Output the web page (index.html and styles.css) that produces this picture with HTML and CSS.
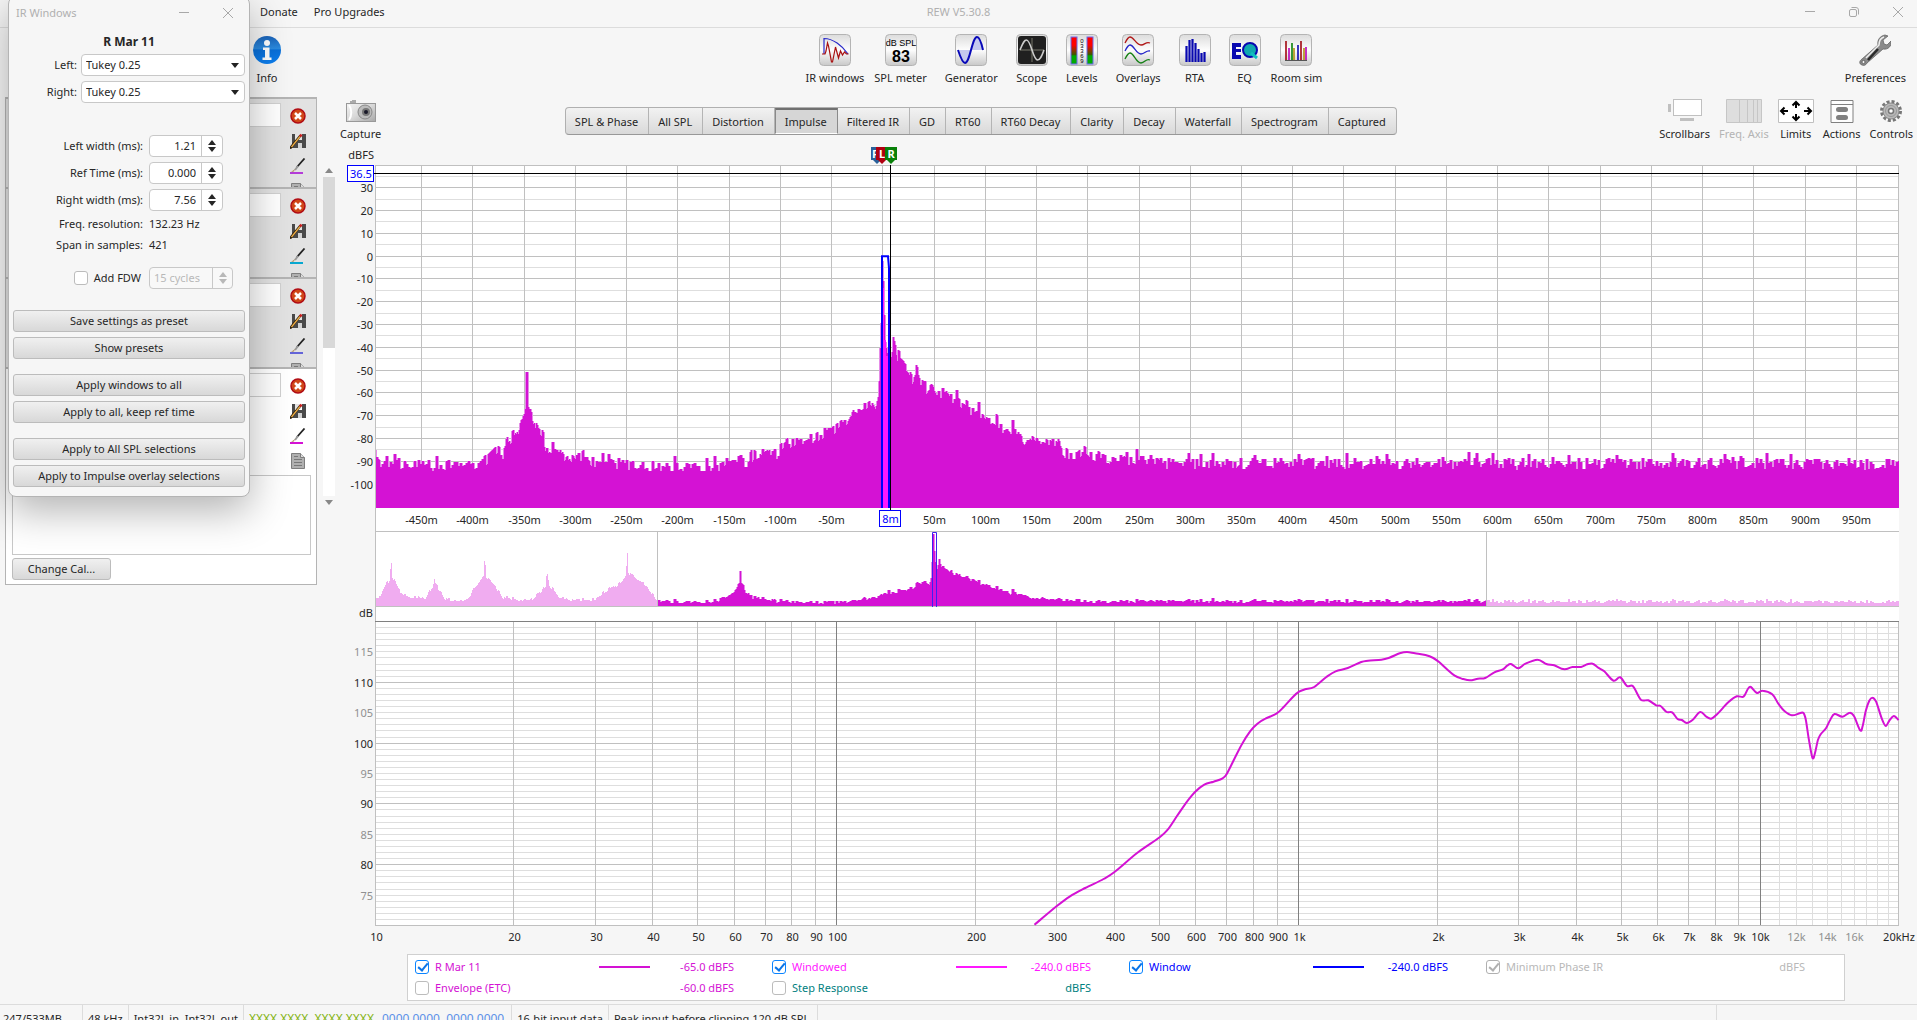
FILE: index.html
```html
<!DOCTYPE html>
<html lang="en">
<head>
    <meta charset="UTF-8">
    <meta name="viewport" content="width=device-width, initial-scale=1.0">
    <title>REW V5.30.8</title>
    <link rel="stylesheet" href="styles.css">
</head>
<body>
    <header class="titlebar">
        <nav class="menu">
            <a href="#donate">Donate</a>
            <a href="#upgrades">Pro Upgrades</a>
        </nav>
        <h1 class="title">REW V5.30.8</h1>
        <div class="window-controls">
            <button aria-label="Minimize"><svg width="10" height="10"><path d="M0 4.5h10"/></svg></button>
            <button aria-label="Restore"><svg width="10" height="10"><rect x=".5" y="2.5" width="7" height="7" rx="1.5"/><path d="M2.5.5H7A2.5 2.5 0 0 1 9.500 3v4.500"/></svg></button>
            <button aria-label="Close"><svg width="10" height="10"><path d="M0 0l10 10M10 0L0 10"/></svg></button>
        </div>
    </header>

    <div class="toolbar">
        <button class="tool">
            <svg width="32" height="32" viewBox="0 0 32 32">
                <defs>
                    <linearGradient id="infoFill" x2="0" y2="1"><stop offset="0" stop-color="#1a62b8"/><stop offset=".45" stop-color="#2b8be0"/><stop offset=".5" stop-color="#0a6fd8"/><stop offset="1" stop-color="#0c7ff0"/></linearGradient>
                    <linearGradient id="tile" x2="0" y2="1"><stop offset="0" stop-color="#dcdcdc"/><stop offset=".5" stop-color="#fdfdfd"/><stop offset="1" stop-color="#c8c8c8"/></linearGradient>
                    <linearGradient id="metal" x2="1" y2="1"><stop offset="0" stop-color="#f4f4f4"/><stop offset=".5" stop-color="#d8d8d8"/><stop offset="1" stop-color="#a8a8a8"/></linearGradient>
                </defs>
                <circle cx="16" cy="16" r="14" fill="url(#infoFill)"/>
                <circle cx="16" cy="9" r="3" fill="#fff"/>
                <path d="M12 13.500h6.500v10h2v2.500h-9v-2.500h2.500v-7.500h-2z" fill="#fff"/>
            </svg>
            Info
        </button>

        <div class="tool-group">
            <button class="tool">
                <svg width="32" height="32" viewBox="0 0 32 32"><use href="#tileBox"/><path d="M5 20V4.500c9 0 18 7 24 15.500" fill="none" stroke="#2828c8" stroke-width="1.200"/><path d="M3 20h3l1-3 1.500-8 1 3 3 16 1 0 3-15 3 11 2-7 2 4 2-3 2 2h2" fill="none" stroke="#a81010" stroke-width="1.200"/></svg>
                IR windows
            </button>
            <button class="tool tight">
                <svg width="32" height="32" viewBox="0 0 32 32"><use href="#tileBox"/><text x="16" y="12" class="spl-small">dB SPL</text><text x="16" y="28" class="spl-big">83</text></svg>
                SPL meter
            </button>
            <button class="tool">
                <svg width="32" height="32" viewBox="0 0 32 32"><use href="#tileBox"/><path d="M4 16h12c-2 9-4 13-6 13s-4-5-6-13zM16 16h12c-2-9-4-13-6-13s-4 5-6 13z" fill="#c4c8ee"/><path d="M3 16c3 9 5 13 7 13 5 0 7-26 12-26 2 0 4 4 6 13" fill="none" stroke="#0808b8" stroke-width="2"/></svg>
                Generator
            </button>
            <button class="tool">
                <svg width="32" height="32" viewBox="0 0 32 32"><use href="#tileBox"/><rect x="2" y="2" width="28" height="28" rx="3" fill="#202020"/><path d="M16 4v24M4 16h24" stroke="#77776a"/><path d="M4 16c3-7 4-10 6.500-10 4.500 0 6.500 20 11 20 2.500 0 4-3 6.500-10" fill="none" stroke="#ccc" stroke-width="1.600"/></svg>
                Scope
            </button>
            <button class="tool">
                <svg width="32" height="32" viewBox="0 0 32 32">
                    <defs><linearGradient id="level" x2="0" y2="1"><stop offset=".3" stop-color="#f00"/><stop offset=".65" stop-color="#3c5a00"/><stop offset=".7" stop-color="#0a0"/></linearGradient></defs>
                    <use href="#tileBox"/><rect x="5" y="3" width="6" height="27" fill="url(#level)" stroke="#6a6af0" stroke-width="1"/><rect x="21" y="3" width="6" height="27" fill="url(#level)" stroke="#6a6af0" stroke-width="1"/>
                    <g class="level-digits"><text x="16" y="9">0</text><text x="16" y="14">3</text><text x="16" y="19">3</text><text x="16" y="24">6</text><text x="16" y="29">9</text></g>
                </svg>
                Levels
            </button>
            <button class="tool">
                <svg width="32" height="32" viewBox="0 0 32 32"><use href="#tileBox"/><g fill="none" stroke-width="1.300"><path d="M3 9c2-4 3-6 5-6 4 0 6 8 11 8 4 0 5-4 9-2" stroke="#b01818"/><path d="M3 17c2-4 3-6 5-6 4 0 6 9 11 9 4 0 5-4 9-3" stroke="#2424c8"/><path d="M3 25c2-4 3-6 5-6 4 0 6 10 11 10 4 0 5-5 9-3" stroke="#148014"/></g></svg>
                Overlays
            </button>
            <button class="tool">
                <svg width="32" height="32" viewBox="0 0 32 32"><use href="#tileBox"/><path d="M7.500 28V12M10.500 28V6M13.500 28V5M16.500 28V9M19.500 28V15M22.500 28V19M25.500 28V18" stroke="#0808b0" stroke-width="2.200"/></svg>
                RTA
            </button>
            <button class="tool">
                <svg width="32" height="32" viewBox="0 0 32 32"><use href="#tileBox"/><path d="M3 9h9v4H7v2h5v3H7v3h5v4H3z" fill="#0808b0"/><circle cx="21" cy="16" r="7" fill="#10a8b0" stroke="#0808b0" stroke-width="2"/><path d="M22 19l6 5" stroke="#10c0c0" stroke-width="3"/></svg>
                EQ
            </button>
            <button class="tool tight">
                <svg width="32" height="32" viewBox="0 0 32 32"><use href="#tileBox"/><g stroke-width="1.600"><path d="M6 27V7M21 27V7" stroke="#a00810"/><path d="M9 27V14M26 27V13" stroke="#b800b8"/><path d="M12 27V9" stroke="#088008"/><path d="M14 27V14M24 27V14" stroke="#b09010"/><path d="M18 27V11" stroke="#0808b0"/><path d="M5 26.500h22" stroke="#555" stroke-width="1"/></g></svg>
                Room sim
            </button>
        </div>

        <button class="tool">
            <svg width="32" height="32" viewBox="0 0 32 32"><path d="M3 31c-3-1-3-4 0-6l16-14c-1-5 2-9 7-10l3 1-5 4 1 4 3 1 4-4c1 5-3 9-8 8L8 29c-1 2-3 3-5 2z" fill="#8a8a8a" stroke="#666" stroke-width=".8"/><path d="M7 24L20 11c0-4 2-7 5-8" stroke="#eee" stroke-width="1.500" fill="none"/><path d="M9 26l10-11" stroke="#2a2a2a" stroke-width="2.500"/><circle cx="4.500" cy="28" r="1.600" fill="#f4f4f4" stroke="#666"/></svg>
            Preferences
        </button>
    </div>

    <main class="workspace">
        <aside class="sidebar">
            <div class="measurements" id="measurements">
                <section class="card">
                    <input class="card-name" type="text" aria-label="Measurement 1 name">
                    <div class="card-actions" data-color="#b43cd8"></div>
                </section>
                <section class="card">
                    <input class="card-name" type="text" aria-label="Measurement 2 name">
                    <div class="card-actions" data-color="#08a8d0"></div>
                </section>
                <section class="card">
                    <input class="card-name" type="text" aria-label="Measurement 3 name">
                    <div class="card-actions" data-color="#6464d8"></div>
                </section>
                <section class="card selected">
                    <input class="card-name" type="text" aria-label="Measurement 4 name">
                    <div class="card-actions" data-color="#d412d4"></div>
                    <textarea class="card-notes" aria-label="Notes"></textarea>
                    <button class="button change-cal">Change Cal...</button>
                </section>
            </div>
            <div class="scrollbar">
                <span class="arrow-up"></span>
                <div class="track"><div class="thumb"></div></div>
                <span class="arrow-down"></span>
            </div>
        </aside>

        <div class="graph-panel">
            <div class="graph-header">
                <button class="tool small">
                    <svg width="30" height="24" viewBox="0 0 30 24"><path d="M4 4V2h2V1h4v3z" fill="#aaa"/><rect x=".5" y="4.500" width="29" height="18" fill="url(#metal)" stroke="#999"/><path d="M3 6c3 4 3 11 0 15" stroke="#fff" stroke-width="2" fill="none"/><circle cx="19" cy="13" r="7" fill="#bbb" stroke="#888"/><circle cx="20" cy="13" r="4" fill="#777"/><circle cx="20" cy="13" r="2" fill="#181828"/></svg>
                    Capture
                </button>
                <div class="tabs">
                    <button>SPL &amp; Phase</button>
                    <button>All SPL</button>
                    <button>Distortion</button>
                    <button class="active" aria-pressed="true">Impulse</button>
                    <button>Filtered IR</button>
                    <button>GD</button>
                    <button>RT60</button>
                    <button>RT60 Decay</button>
                    <button>Clarity</button>
                    <button>Decay</button>
                    <button>Waterfall</button>
                    <button>Spectrogram</button>
                    <button>Captured</button>
                </div>
                <div class="graph-tools">
                    <button class="tool small">
                        <svg width="36" height="24" viewBox="0 0 36 24"><rect x="6.500" y=".5" width="28" height="16" fill="#fff" stroke="#c0c0c0"/><path d="M1 5h3v8H1zM13 19h14v3H13z" fill="#c0c0c0"/></svg>
                        Scrollbars
                    </button>
                    <button class="tool small" disabled>
                        <svg width="36" height="24" viewBox="0 0 36 24"><path d="M.5.5h35v23H.5zM13.500.5v23M21.500.5v23M27.500.5v23M31.500.5v23" fill="#dedede" stroke="#c6c6c6"/></svg>
                        Freq. Axis
                    </button>
                    <button class="tool small">
                        <svg width="36" height="24" viewBox="0 0 36 24"><path d="M.5.5h35v23H.5z" fill="#fff" stroke="#c0c0c0"/><path d="M18 9V3M14.500 6.500L18 3l3.500 3.500M18 15v6M14.500 17.500L18 21l3.500-3.500M10 12H3M6.500 8.500L3 12l3.500 3.500M26 12h7M29.500 8.500L33 12l-3.500 3.500" fill="none" stroke="#000" stroke-width="2"/></svg>
                        Limits
                    </button>
                    <button class="tool small">
                        <svg width="24" height="24" viewBox="0 0 24 24"><path d="M1 1.500h22v22H1zM1 5.500h22" fill="#fdfdfd" stroke="#808080"/><rect x="6" y="8" width="12" height="5" rx="2.500" fill="#808080"/><rect x="6" y="16" width="12" height="5" rx="2.500" fill="#808080"/></svg>
                        Actions
                    </button>
                    <button class="tool small">
                        <svg width="24" height="24" viewBox="0 0 24 24"><circle cx="12" cy="12" r="9.500" fill="none" stroke="#777" stroke-width="3" stroke-dasharray="3 2"/><circle cx="12" cy="12" r="8" fill="#b8b8b8" stroke="#8a8a8a"/><circle cx="12" cy="12" r="5.500" fill="none" stroke="#999"/><circle cx="12" cy="12" r="2.500" fill="#fff" stroke="#777" stroke-width="1.500"/></svg>
                        Controls
                    </button>
                </div>
            </div>

            <svg class="plot impulse-plot" id="impulse" role="img" aria-label="Impulse response"></svg>
            <svg class="plot overview-plot" id="overview" role="img" aria-label="Impulse overview"></svg>
            <svg class="plot spl-plot" id="spl" role="img" aria-label="Windowed frequency response"></svg>

            <div class="legend">
                <div class="trace main"><label><input type="checkbox" checked>R Mar 11</label><span class="swatch"></span><span class="value">-65.0 dBFS</span></div>
                <div class="trace windowed"><label><input type="checkbox" checked>Windowed</label><span class="swatch"></span><span class="value">-240.0 dBFS</span></div>
                <div class="trace window"><label><input type="checkbox" checked>Window</label><span class="swatch"></span><span class="value">-240.0 dBFS</span></div>
                <div class="trace off"><label><input type="checkbox" checked disabled>Minimum Phase IR</label><span class="value">dBFS</span></div>
                <div class="trace main"><label><input type="checkbox">Envelope (ETC)</label><span class="value">-60.0 dBFS</span></div>
                <div class="trace step"><label><input type="checkbox">Step Response</label><span class="value">dBFS</span></div>
            </div>
        </div>
    </main>

    <footer class="statusbar">
        <span class="memory">247/533MB</span>
        <span>48 kHz</span>
        <span>Int32L in, Int32L out</span>
        <span class="bits"><b>XXXX XXXX&nbsp; XXXX XXXX</b><i>0000 0000&nbsp; 0000 0000</i></span>
        <span>16-bit input data</span>
        <span class="clip">Peak input before clipping 120 dB SPL</span>
        <span class="rest"></span>
    </footer>

    <div class="dialog" role="dialog" aria-label="IR Windows">
        <div class="dialog-title">
            <h2>IR Windows</h2>
            <button aria-label="Minimize"><svg width="10" height="10"><path d="M0 4.500h10"/></svg></button>
            <button aria-label="Close"><svg width="10" height="10"><path d="M0 0l10 10M10 0L0 10"/></svg></button>
        </div>
        <h3>R Mar 11</h3>
        <div class="combos">
            <label for="leftWin">Left:</label>
            <div class="combo"><select id="leftWin"><option>Tukey 0.25</option></select></div>
            <label for="rightWin">Right:</label>
            <div class="combo"><select id="rightWin"><option>Tukey 0.25</option></select></div>
        </div>
        <div class="settings">
            <label for="leftWidth">Left width (ms):</label>
            <div class="spinner"><input id="leftWidth" type="text" value="1.21"><span class="steps"></span></div>
            <label for="refTime">Ref Time (ms):</label>
            <div class="spinner"><input id="refTime" type="text" value="0.000"><span class="steps"></span></div>
            <label for="rightWidth">Right width (ms):</label>
            <div class="spinner"><input id="rightWidth" type="text" value="7.56"><span class="steps"></span></div>
            <span>Freq. resolution:</span><output>132.23 Hz</output>
            <span>Span in samples:</span><output>421</output>
        </div>
        <div class="settings fdw">
            <label><input type="checkbox">Add FDW</label>
            <div class="spinner wide"><input type="text" value="15 cycles" aria-label="FDW cycles" disabled><span class="steps"></span></div>
        </div>
        <div class="button-pair">
            <button class="button">Save settings as preset</button>
            <button class="button">Show presets</button>
        </div>
        <div class="button-pair">
            <button class="button">Apply windows to all</button>
            <button class="button">Apply to all, keep ref time</button>
        </div>
        <div class="button-pair">
            <button class="button">Apply to All SPL selections</button>
            <button class="button">Apply to Impulse overlay selections</button>
        </div>
    </div>

    <!-- shared icon parts -->
    <svg class="symbols" aria-hidden="true">
        <defs>
            <rect id="tileBox" x=".5" y=".5" width="31" height="31" rx="4" fill="url(#tile)" stroke="#b4b4b4"/>
            <symbol id="iconDelete" viewBox="0 0 16 16"><circle cx="8" cy="8" r="7" fill="#d04818" stroke="#b00c14" stroke-width="1.500"/><path d="M5 5l6 6M11 5l-6 6" stroke="#fff" stroke-width="2.500"/></symbol>
            <symbol id="iconSave" viewBox="0 0 16 16"><path d="M2 1h3v6h7V1h4v14H2z" fill="#4a4a4a"/><path d="M5 1h6v5H5z" fill="#e4e4e4"/><path d="M8 10h4v5H8z" fill="#d4d4d4"/><path d="M0 15.500L10.500 2.500" stroke="#2c1c08" stroke-width="2.400"/><path d="M1.500 14L10 3.500" stroke="#f0b048" stroke-width="1.300"/><path d="M10 3.500l1.500-2" stroke="#d02020" stroke-width="2.500"/></symbol>
            <symbol id="iconBrush" viewBox="0 0 16 16"><path d="M14.500.5L7 9" stroke="#222" stroke-width="1.800"/><path d="M8 8l-3 4" stroke="#999" stroke-width="2"/><path d="M5 11l-4 3 3-.5z" fill="#b09060"/></symbol>
            <symbol id="iconNotes" viewBox="0 0 16 16"><path d="M1.500.5h9l4 4v11h-13z" fill="#b0b0b0" stroke="#7e7e7e"/><path d="M10.500.5v4h4" fill="#ddd" stroke="#7e7e7e"/><path d="M4 6.500h8M4 9.500h8M4 12.500h8M4 3.500h4" stroke="#787878"/></symbol>
        </defs>
    </svg>
    <script src="script.js"></script>
</body>
</html>
```
FILE: styles.css
```css
* {
    margin: 0;
    padding: 0;
    box-sizing: border-box;
}

body {
    display: flex;
    flex-direction: column;
    height: 100vh;
    overflow: hidden;
    background: #f6f6f6;
    color: #262626;
    font-family: 'Noto Sans', 'Open Sans', sans-serif;
    font-size: 11px;
    line-height: 16px;
}

button, input, select, textarea {
    font: inherit;
    color: inherit;
}

button {
    background: none;
    border: none;
    white-space: nowrap;
}

a {
    color: inherit;
    text-decoration: none;
}

.symbols {
    position: absolute;
    width: 0;
    height: 0;
}

/* Title bar */
.titlebar {
    display: grid;
    grid-template-columns: 1fr auto 1fr;
    align-items: center;
    height: 28px;
    padding-bottom: 3px;
    border-bottom: 1px solid #dcdcdc;
}

.menu {
    display: flex;
    gap: 16px;
    padding-left: 260px;
}

.title {
    font-size: 11px;
    font-weight: normal;
    color: #b0b0b0;
}

.window-controls {
    display: flex;
    justify-content: flex-end;
    gap: 34px;
    padding-right: 14px;
}

.window-controls svg, .dialog-title svg {
    display: block;
    fill: none;
    stroke: #a8a8a8;
}

/* Toolbar */
.toolbar {
    display: flex;
    justify-content: space-between;
    height: 69px;
    padding: 6px 11px 0 251px;
}

.tool-group {
    display: flex;
    gap: 18px;
}

.tool {
    display: flex;
    flex-direction: column;
    align-items: center;
    gap: 4px;
    min-width: 32px;
}

.tight {
    margin-left: -8px;
}

.tool.small {
    gap: 3px;
    padding-top: 2px;
}

.tool:disabled {
    color: #b4b4b4;
}

.spl-small {
    font: 9px 'Liberation Sans', sans-serif;
    text-anchor: middle;
}

.spl-big {
    font: bold 16px 'Liberation Sans', sans-serif;
    text-anchor: middle;
}

.level-digits {
    font: 6px 'Liberation Sans', sans-serif;
    text-anchor: middle;
}

/* Main area */
.workspace {
    flex: 1;
    display: grid;
    grid-template-columns: 340px 1fr;
    min-height: 0;
}

.sidebar {
    display: flex;
    align-items: flex-start;
    gap: 6px;
    padding-left: 5px;
}

.measurements {
    width: 312px;
}

.card {
    display: grid;
    grid-template-columns: 1fr 16px;
    column-gap: 9px;
    align-content: start;
    height: 90px;
    padding: 4px 10px 0 6px;
    overflow: hidden;
    border: 1px solid #b4b4b4;
    border-width: 2px 1px 0 1px;
    background: #e2e2e2;
}

.card.selected {
    height: auto;
    padding-bottom: 4px;
    border-bottom-width: 1px;
    background: #fff;
}

.card-name {
    width: 100%;
    height: 24px;
    border: 1px solid #d0d0d0;
    background: #fff;
}

.card-actions {
    display: flex;
    flex-direction: column;
    gap: 9px;
    padding-top: 5px;
    height: 102px;
}

.card-actions button, .card-actions svg {
    display: block;
    width: 16px;
    height: 16px;
}

.card-actions .brush {
    width: 13px;
    border-bottom: 2px solid;
}

.card-notes {
    grid-column: 1 / -1;
    height: 80px;
    margin-right: -5px;
    resize: none;
    border: 1px solid #c8c8c8;
    background: #fff;
}

.button {
    height: 22px;
    border: 1px solid #bcbcbc;
    border-radius: 3px;
    background: linear-gradient(#f0f0f0, #d8d8d8);
}

.change-cal {
    justify-self: start;
    width: 99px;
    margin-top: 3px;
}

.scrollbar {
    display: flex;
    flex-direction: column;
    align-items: center;
    gap: 4px;
    width: 12px;
    margin-top: 71px;
}

.track {
    width: 12px;
    height: 319px;
    background: #fff;
}

.thumb {
    height: 171px;
    background: #d8d8d8;
}

.arrow-up, .arrow-down {
    border: 4px solid transparent;
}

.arrow-up {
    border-top: 0;
    border-bottom: 5px solid #888;
}

.arrow-down {
    border-bottom: 0;
    border-top: 5px solid #888;
}

.graph-panel {
    display: flex;
    flex-direction: column;
    min-width: 0;
}

.graph-header {
    display: grid;
    grid-template-columns: auto 7fr auto 10fr auto;
    height: 49px;
    padding-right: 4px;
}

.tabs {
    grid-column: 3;
    align-self: start;
    display: flex;
    height: 28px;
    margin-top: 10px;
    border: 1px solid #b0b0b0;
    border-bottom-color: #989898;
    border-radius: 4px;
    background: linear-gradient(#f2f2f2, #d9d9d9);
}

.tabs button {
    padding: 1px 10px 0 9px;
    border-right: 1px solid #b4b4b4;
}

.tabs button:last-child {
    border-right: none;
}

.tabs .active {
    border: 1px solid #8a8a8a;
    border-top: 2px solid #707070;
    border-bottom: 1px solid #fff;
    background: #d6d6d6;
}

.graph-tools {
    grid-column: 5;
    display: flex;
    gap: 9px;
}

/* Plots */
.plot {
    display: block;
    width: 100%;
    min-height: 0;
    overflow: visible;
}

.impulse-plot {
    flex: 385 1 0;
}

.overview-plot {
    flex: 76 1 0;
}

.spl-plot {
    flex: 347 1 0;
}

.plot text {
    fill: #262626;
}

.plot .minor-label {
    fill: #909090;
}

.paper { fill: #fff; }
.grid, .grid-light, .grid-dark { fill: none; shape-rendering: crispEdges; }
.grid { stroke: #c0c0c0; }
.grid-light { stroke: #dedede; }
.grid-dark { stroke: #808080; }
.trace-fill { fill: #d412d4; shape-rendering: crispEdges; }
.trace-edge { fill: #e58ce8; shape-rendering: crispEdges; }
.trace-pale { fill: #f0acf0; shape-rendering: crispEdges; }
.windowed-fill { fill: #ff18ff; shape-rendering: crispEdges; }
.window-line { fill: none; stroke: #0000ff; stroke-width: 2; }
.window-thin { fill: none; stroke: #4020f0; stroke-width: 1; }
.cursor { fill: none; stroke: #000; shape-rendering: crispEdges; }
.response { fill: none; stroke: #d412d4; stroke-width: 2; stroke-linejoin: round; }
.readout { fill: #fff; stroke: #0000ff; shape-rendering: crispEdges; }
.plot .readout-text { fill: #0000ff; }
.plot .marker-text { fill: #fff; font-weight: bold; }

/* Legend */
.legend {
    display: grid;
    grid-template-columns: repeat(4, 1fr);
    row-gap: 4px;
    margin: 0 72px 3px 67px;
    padding: 3px 1px 4px 7px;
    border: 1px solid #d0d0d0;
    background: #fff;
}

.trace {
    display: grid;
    grid-template-columns: 184px 51px 84px;
    align-items: center;
    height: 17px;
}

.trace label, .fdw label {
    display: flex;
    align-items: center;
    gap: 6px;
}

.swatch {
    height: 2px;
    background: currentColor;
}

.value {
    grid-column: 3;
    text-align: right;
}

.main { color: #d412d4; }
.windowed { color: #ff18ff; }
.window { color: #0000ff; }
.off { color: #b8b8b8; }
.step { color: #008080; }

input[type="checkbox"] {
    appearance: none;
    width: 14px;
    height: 14px;
    border: 1px solid #bcbcbc;
    border-radius: 3px;
    background: #fff;
}

input[type="checkbox"]:checked {
    border: 1px solid #0a84ff;
}

input[type="checkbox"]:checked::after {
    content: "";
    display: block;
    width: 4px;
    height: 8px;
    margin: 0 0 0 4px;
    border: solid #0a74e8;
    border-width: 0 2px 2px 0;
    transform: rotate(40deg);
}

input[type="checkbox"]:disabled,
input[type="checkbox"]:disabled::after {
    border-color: #b0b0b0;
}

/* Status bar */
.statusbar {
    display: flex;
    height: 16px;
    padding-top: 4px;
    overflow: hidden;
    border-top: 1px solid #dcdcdc;
    line-height: 20px;
    white-space: pre;
}

.statusbar span {
    margin-top: -4px;
    padding: 4px 5px 0 5px;
    border-right: 1px solid #dcdcdc;
}

.statusbar .memory {
    width: 83px;
    padding-left: 3px;
}

.statusbar .clip {
    padding-right: 8px;
}

.statusbar .rest {
    flex: 1;
    margin-right: 200px;
}

.statusbar .bits {
    padding-right: 7px;
    font-size: 12px;
}

.bits b {
    margin-right: 8px;
    font-weight: normal;
    color: #84b414;
}

.bits i {
    font-style: normal;
    color: #5a90e8;
}

/* IR Windows dialog */
.dialog {
    position: absolute;
    left: 8px;
    top: -4px;
    width: 242px;
    padding: 4px 4px 9px 4px;
    border: 1px solid #b4b4b4;
    border-radius: 8px;
    background: #f6f6f6;
    box-shadow: 0 14px 40px rgba(0, 0, 0, 0.3);
}

.dialog-title {
    display: flex;
    align-items: center;
    gap: 34px;
    height: 24px;
    padding: 0 12px 0 3px;
}

.dialog-title h2 {
    flex: 1;
    font-size: 11px;
    font-weight: normal;
    color: #b0b0b0;
}

.dialog h3 {
    margin-top: 8px;
    font-size: 12px;
    line-height: 18px;
    text-align: center;
}

.combos {
    display: grid;
    grid-template-columns: 64px 1fr;
    column-gap: 4px;
    row-gap: 5px;
    align-items: center;
    margin-top: 3px;
    text-align: right;
}

.combo {
    position: relative;
}

.combo select {
    display: block;
    width: 100%;
    height: 22px;
    padding-left: 4px;
    appearance: none;
    border: 1px solid #c8c8c8;
    border-radius: 4px;
    background: #fff;
}

.combo::after {
    content: "";
    position: absolute;
    right: 6px;
    top: 9px;
    border: 4px solid transparent;
    border-top: 5px solid #222;
    border-bottom: 0;
    pointer-events: none;
}

.settings {
    display: grid;
    grid-template-columns: 130px 1fr;
    column-gap: 6px;
    row-gap: 5px;
    align-items: center;
    margin-top: 32px;
    text-align: right;
}

.settings output {
    text-align: left;
}

.spinner {
    display: grid;
    grid-template-columns: 52px 20px;
    width: 74px;
    height: 22px;
    border: 1px solid #c8c8c8;
    border-radius: 4px;
    background: #fff;
    overflow: hidden;
}

.spinner.wide {
    grid-template-columns: 63px 19px;
    width: 84px;
    color: #b8b8b8;
    background: #f8f8f8;
}

.spinner input {
    width: 100%;
    padding-right: 5px;
    border: none;
    border-right: 1px solid #c8c8c8;
    background: none;
    text-align: right;
}

.spinner.wide input {
    padding-left: 4px;
    text-align: left;
}

.steps {
    display: flex;
    flex-direction: column;
    align-items: center;
    justify-content: center;
    gap: 2px;
}

.steps::before, .steps::after {
    content: "";
    border: 4px solid transparent;
}

.steps::before {
    border-top: 0;
    border-bottom: 5px solid currentColor;
}

.steps::after {
    border-bottom: 0;
    border-top: 5px solid currentColor;
}

.fdw {
    margin-top: 14px;
}

.fdw label {
    justify-content: flex-end;
    padding-right: 2px;
}

.button-pair {
    display: grid;
    row-gap: 5px;
    margin-top: 15px;
}

.fdw + .button-pair {
    margin-top: 21px;
}
```
FILE: script.js
```javascript
const NS = "http://www.w3.org/2000/svg";
const LEFT = 35;
const RIGHT = 18;

function el(svg, name, cls, attrs, text) {
    const node = document.createElementNS(NS, name);
    if (cls) node.setAttribute("class", cls);
    for (const key in attrs) node.setAttribute(key, attrs[key]);
    if (text !== undefined) node.textContent = text;
    svg.appendChild(node);
    return node;
}

function label(svg, x, y, text, anchor, cls) {
    el(svg, "text", cls, { x: x, y: y, "text-anchor": anchor || "middle" }, text);
}

// level against time: [ms, dB]
const envelope = [
    [-1010, -88], [-996, -88], [-986, -73], [-977, -64], [-974.500, -60], [-974, -41], [-972, -41], [-971, -60], [-969, -62], [-959, -76], [-945, -84],
    [-924, -86], [-911, -88], [-904, -78], [-898, -70], [-895, -60], [-892, -71], [-883, -79], [-876, -88],
    [-855, -91], [-833, -88], [-825, -73], [-811, -63], [-807, -59], [-806, -41], [-804, -41], [-803, -58], [-790, -69], [-780, -78], [-770, -87],
    [-740, -90], [-718, -87], [-704, -80], [-695, -70], [-694, -56], [-692, -56], [-689, -71], [-680, -78], [-670, -86],
    [-640, -91], [-605, -88], [-581, -76], [-557, -65], [-551, -56], [-550, -29], [-548, -29], [-547, -54], [-536, -58], [-512, -72], [-505, -80],
    [-495, -90], [-470, -91], [-430, -92], [-389, -91], [-380, -87], [-375, -85], [-370, -87], [-365, -83], [-360, -81], [-356, -78],
    [-352, -72], [-349, -69], [-347.600, -66], [-347.500, -51], [-345.500, -51], [-345.400, -66], [-344, -67], [-340, -72], [-337, -78], [-331, -80],
    [-328, -86], [-314, -85], [-310, -90], [-305, -88], [-298, -91], [-288, -89], [-279, -91], [-220, -92],
    [-158, -92], [-145, -90], [-130, -90], [-125, -87], [-118, -89], [-109, -86], [-100, -87], [-93, -82], [-78, -80], [-68, -80],
    [-56, -77], [-49, -77], [-43, -74], [-35, -73], [-28, -69], [-20, -68], [-12, -65], [-6, -68], [-3, -60], [-2, -41],
    [-1, -38], [0, 0], [1.500, -14], [2.800, -37], [7.500, -48], [10, -42], [11, -35], [13, -40], [15, -45], [23, -49], [29, -54],
    [33, -51], [37, -56], [43, -58], [49, -56], [53, -60], [62, -60], [66, -63], [73, -63], [79, -66], [86, -68], [97, -69],
    [105, -72], [115, -75], [125, -76], [133, -77], [138, -82], [143, -78], [151, -81], [169, -82], [175, -86],
    [190, -88], [196, -85], [203, -88], [225, -89], [260, -89.500], [275, -91.500], [350, -91], [1800, -91.500]
];

// one value per slot, always the same sequence
function noise(n) {
    const s = Math.sin(n * 12.9898 + 4.1414) * 43758.5453;
    return s - Math.floor(s);
}

function levelAt(ms) {
    for (let i = 1; i < envelope.length; i++) {
        if (ms <= envelope[i][0]) {
            const a = envelope[i - 1];
            const b = envelope[i];
            return a[1] + (b[1] - a[1]) * (ms - a[0]) / (b[0] - a[0]);
        }
    }
    return -91;
}

function columnLevel(x, toMs, jitter) {
    const ms = toMs(x + 0.5);
    const db = levelAt(ms);
    if (Math.abs(ms + 346.500) < 3 || (ms > -4 && ms < 12)) return db;
    const slot = Math.floor(x / 2);
    const spike = noise(slot + 7000) > 0.8 ? jitter * 0.5 : 0;
    return db + (noise(slot) - 0.5) * jitter + spike;
}

// filled columns between x0 and x1; soft takes the higher neighbour
function columns(x0, x1, toMs, toY, bottom, jitter, soft) {
    let d = "M" + x0 + " " + bottom;
    for (let x = x0; x < x1; x++) {
        let db = columnLevel(x, toMs, jitter);
        if (soft) {
            db = Math.max(db, columnLevel(x - 1, toMs, jitter), columnLevel(x + 1, toMs, jitter));
        }
        const y = Math.min(bottom, toY(db)).toFixed(1);
        d += "L" + x + " " + y + "L" + (x + 1) + " " + y;
    }
    return d + "L" + x1 + " " + bottom + "Z";
}

function drawImpulse() {
    const svg = document.getElementById("impulse");
    const w = svg.clientWidth;
    const right = w - RIGHT;
    const top = 19;
    const axis = svg.clientHeight - 23;
    const perDb = (axis - top) / 150.5;
    const perMs = (right - LEFT) / 1487;
    const toY = db => top + (40 - db) * perDb;
    const toX = ms => LEFT + 1 + (ms + 494) * perMs;
    const toMs = x => (x - LEFT - 1) / perMs - 494;

    el(svg, "rect", "paper", { x: LEFT, y: top, width: right - LEFT, height: svg.clientHeight - top });
    for (let db = 35; db > -110; db -= 5) {
        const y = Math.floor(toY(db)) + 0.5;
        el(svg, "path", db % 10 ? "grid-light" : "grid", { d: "M" + LEFT + " " + y + "H" + right });
        if (db % 10 === 0) label(svg, LEFT - 2, y + 4, db, "end");
    }
    for (let ms = -450; ms <= 950; ms += 50) {
        const x = Math.round(toX(ms)) + 0.5;
        el(svg, "path", "grid", { d: "M" + x + " " + top + "V" + axis });
        label(svg, x, axis + 16, ms ? ms + "m" : "0");
    }
    el(svg, "path", "grid", { d: "M" + (LEFT + 0.5) + " " + svg.clientHeight + "V" + (top + 0.5) + "H" + (right - 0.5) + "V" + axis });

    el(svg, "path", "trace-edge", { d: columns(LEFT + 1, right, toMs, toY, axis, 5, true) });
    el(svg, "path", "trace-fill", { d: columns(LEFT + 1, right, toMs, toY, axis, 5, false) });

    const zero = Math.round(toX(0));
    el(svg, "path", "windowed-fill", { d: "M" + zero + " " + axis + "V" + toY(0) + "h1V" + toY(-14) + "h1V" + toY(-37) + "h2V" + toY(-44) + "h3V" + axis + "Z" });
    el(svg, "path", "window-line", { d: "M" + zero + " " + axis + "V" + toY(0) + "h6l1 12V" + axis });

    const cy = Math.round(toY(36.500)) + 0.5;
    const cx = zero + 8.5;
    el(svg, "path", "cursor", { d: "M" + (LEFT - 2) + " " + cy + "H" + right + "M" + cx + " " + top + "V" + (axis + 2) });

    label(svg, LEFT - 1, 13, "dBFS", "end");
    el(svg, "rect", "readout", { x: 7.5, y: top + 0.5, width: 26, height: 16 });
    label(svg, 21, top + 13, "36.5", "middle", "readout-text");
    el(svg, "rect", "readout", { x: cx - 11, y: axis + 2.500, width: 21, height: 16 });
    label(svg, cx, axis + 15, "8m", "middle", "readout-text");

    // window start, left and right handles
    [[zero - 5, "#2a6099", "F"], [zero, "#b00010", "L"], [zero + 9, "#088008", "R"]].forEach(m => {
        el(svg, "path", "", { d: "M" + (m[0] - 6) + " 1h12v13h-2l-4 4l-4 -4h-2z", fill: m[1] });
        label(svg, m[0] - (m[2] === "F" ? 2 : 0), 12, m[2], "middle", "marker-text");
    });
}

function drawOverview() {
    const svg = document.getElementById("overview");
    const right = svg.clientWidth - RIGHT;
    const h = svg.clientHeight;
    const perMs = (right - LEFT) / 2735;
    const toMs = x => (x - LEFT) / perMs - 1002;
    const toX = ms => Math.round(LEFT + (ms + 1002) * perMs);
    const toY = db => 1 - db * (h - 2) / 97;
    const a = toX(-496);
    const b = toX(992);

    el(svg, "rect", "paper", { x: LEFT, y: 0, width: right - LEFT, height: h });
    el(svg, "path", "trace-pale", { d: columns(LEFT + 1, a, toMs, toY, h - 1, 4, false) });
    el(svg, "path", "trace-pale", { d: columns(b, right, toMs, toY, h - 1, 4, false) });
    el(svg, "path", "trace-edge", { d: columns(a, b, toMs, toY, h - 1, 4, true) });
    el(svg, "path", "trace-fill", { d: columns(a, b, toMs, toY, h - 1, 4, false) });
    el(svg, "path", "grid", { d: "M" + (a + 0.5) + " 0V" + h + "M" + (b + 0.5) + " 0V" + h + "M" + LEFT + " 0.5H" + right + "M" + LEFT + " " + (h - 0.5) + "H" + right + "M" + (LEFT + 0.5) + " 0V" + h });
    const z = toX(0);
    el(svg, "path", "window-thin", { d: "M" + (z - 0.5) + " " + h + "V1.5h4V" + h });
}

// frequency response: x is 756 per decade with 1 kHz at 554, y is 18.24 per dB down from 120 dB
const response = [
    122, 915, 158, 860, 180, 830, 205, 805, 235, 778, 253, 757, 290, 700, 327, 653, 340, 630, 355, 590, 372, 545, 386, 515,
    400, 495, 415, 486, 430, 476, 437, 462, 450, 415, 462, 372, 475, 335, 487, 312, 500, 297, 518, 282, 530, 262, 545, 232,
    555, 216, 565, 209, 580, 202, 600, 172, 615, 155, 635, 145, 657, 127, 668, 123, 690, 120, 703, 114, 720, 101, 732, 97,
    745, 101, 762, 106, 775, 115, 785, 128, 797, 148, 810, 168, 822, 177, 835, 182, 848, 177, 860, 175, 875, 158, 888, 150,
    896, 138, 902, 133, 914, 146, 926, 132, 946, 120, 960, 133, 973, 137, 985, 147, 993, 148, 1003, 142, 1017, 142, 1027, 134,
    1036, 132, 1045, 144, 1055, 155, 1070, 183, 1081, 173, 1092, 199, 1102, 200, 1115, 240, 1127, 242, 1140, 257, 1147, 259,
    1157, 277, 1166, 278, 1175, 298, 1182, 301, 1190, 310, 1200, 300, 1212, 277, 1222, 291, 1230, 297, 1240, 283, 1258, 248,
    1272, 230, 1283, 231, 1290, 208, 1295, 202, 1305, 220, 1314, 213, 1330, 224, 1340, 252, 1350, 274, 1362, 287, 1375, 281,
    1381, 280, 1385, 300, 1390, 360, 1396, 415, 1400, 400, 1405, 360, 1410, 342, 1418, 326, 1425, 300, 1432, 283, 1445, 291,
    1457, 279, 1464, 290, 1474, 332, 1478, 320, 1483, 275, 1489, 243, 1494, 234, 1500, 246, 1510, 300, 1516, 319, 1522, 302,
    1529, 289, 1537, 301
];

// smooth path through all points
function curve(points) {
    let d = "M" + points[0][0].toFixed(1) + " " + points[0][1].toFixed(1);
    for (let i = 0; i < points.length - 1; i++) {
        const p0 = points[Math.max(i - 1, 0)];
        const p1 = points[i];
        const p2 = points[i + 1];
        const p3 = points[Math.min(i + 2, points.length - 1)];
        d += "C" + [
            p1[0] + (p2[0] - p0[0]) / 6, p1[1] + (p2[1] - p0[1]) / 6,
            p2[0] - (p3[0] - p1[0]) / 6, p2[1] - (p3[1] - p1[1]) / 6,
            p2[0], p2[1]
        ].map(v => v.toFixed(1)).join(" ");
    }
    return d;
}

function drawSpl() {
    const svg = document.getElementById("spl");
    const right = svg.clientWidth - RIGHT;
    const top = 14;
    const axis = svg.clientHeight - 29;
    const decade = (right - LEFT) / Math.log10(2000);
    const toX = f => LEFT + Math.log10(f / 10) * decade;
    const toY = db => top + (120 - db) * (axis - top) / 50;

    el(svg, "rect", "paper", { x: LEFT, y: 0, width: right - LEFT, height: axis });
    for (let db = 119; db > 70; db--) {
        const y = Math.round(toY(db)) + 0.5;
        el(svg, "path", db % 10 ? "grid-light" : "grid", { d: "M" + LEFT + " " + y + "H" + right });
        if (db % 5 === 0) label(svg, LEFT - 2, y + 4, db, "end", db % 10 ? "minor-label" : "");
    }
    const names = { 1: "1k", 2: "2k", 3: "3k", 4: "4k", 5: "5k", 6: "6k", 7: "7k", 8: "8k", 9: "9k" };
    [10, 100, 1000].forEach(base => {
        for (let n = 1; n < 10; n++) {
            const x = Math.floor(toX(base * n)) + 0.5;
            el(svg, "path", n === 1 && base > 10 ? "grid-dark" : "grid", { d: "M" + x + " " + top + "V" + axis });
            label(svg, x + 1, axis + 16, base === 1000 ? names[n] : base * n);
        }
    });
    for (let k = 10; k < 20; k++) {
        const x = Math.floor(toX(k * 1000)) + 0.5;
        el(svg, "path", k === 10 ? "grid-dark" : "grid-light", { d: "M" + x + " " + top + "V" + axis });
        if (k === 10) label(svg, x, axis + 16, "10k");
        if (k === 12 || k === 14 || k === 16) label(svg, x, axis + 16, k + "k", "middle", "minor-label");
    }
    label(svg, right, axis + 16, "20kHz");
    label(svg, LEFT - 2, 10, "dB", "end");
    el(svg, "path", "grid", { d: "M" + (LEFT + 0.5) + " 0V" + (axis + 0.5) + "H" + (right - 0.5) + "V" + top });
    el(svg, "path", "grid-dark", { d: "M" + LEFT + " " + (top + 0.5) + "H" + right });

    const points = [];
    for (let i = 0; i < response.length; i += 2) {
        const x = toX(1000 * Math.pow(10, (response[i] - 554) / 756));
        const y = toY(120 - (response[i + 1] - 4) / 18.24);
        points.push([Math.min(x, right), Math.min(y, axis)]);
    }
    el(svg, "path", "response", { d: curve(points) });
}

function fillCards() {
    document.querySelectorAll(".card-actions").forEach(box => {
        ["Delete", "Save", "Brush", "Notes"].forEach(name => {
            const button = document.createElement("button");
            button.setAttribute("aria-label", name);
            if (name === "Brush") {
                button.className = "brush";
                button.style.borderColor = box.dataset.color;
            }
            button.innerHTML = '<svg><use href="#icon' + name + '"/></svg>';
            box.appendChild(button);
        });
    });
}

function drawAll() {
    document.querySelectorAll(".plot").forEach(svg => { svg.innerHTML = ""; });
    drawImpulse();
    drawOverview();
    drawSpl();
}

fillCards();
drawAll();
window.addEventListener("resize", drawAll);
```
